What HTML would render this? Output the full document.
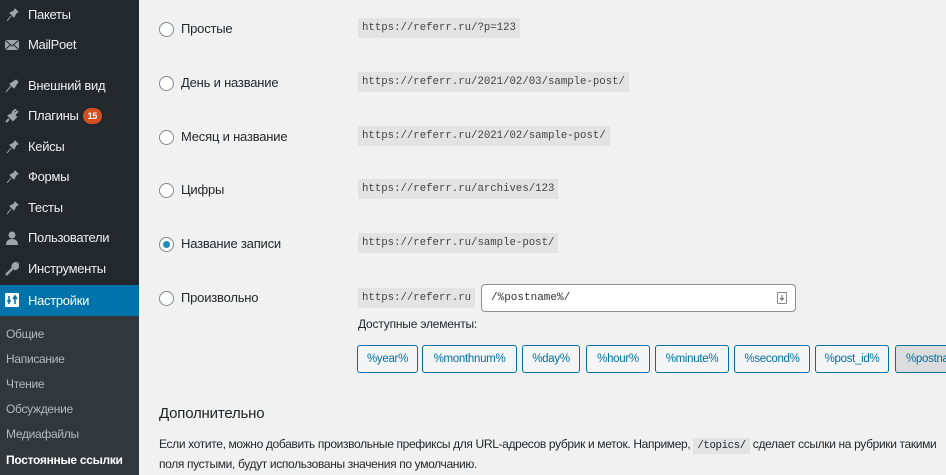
<!DOCTYPE html>
<html><head><meta charset="utf-8"><style>
*{box-sizing:border-box;margin:0;padding:0}
body{width:946px;height:475px;overflow:hidden;background:#f1f1f1;font-family:"Liberation Sans",sans-serif;position:relative;color:#23282d}
#sb{position:absolute;left:0;top:0;width:139px;height:475px;background:#23282d}
.mi{position:absolute;left:0;width:139px;height:30px;color:#eee;font-size:13px;line-height:30px;padding-left:28px;letter-spacing:-0.3px}
.ic{position:absolute;left:5px;top:8px;width:14px;height:14px}
.act{background:#0073aa;color:#fff}
.badge{display:inline-block;background:#d54e21;color:#fff;font-size:9px;font-weight:bold;border-radius:9px;height:16px;line-height:16px;padding:0 5px;margin-left:4px;vertical-align:1px}
#sub{position:absolute;left:0;top:316px;width:139px;height:159px;background:#32373c}
.si{position:absolute;left:6px;font-size:12px;color:#b4b9be;letter-spacing:-0.3px}
.arrow{position:absolute;left:131px;top:292px;width:0;height:0;border:8px solid transparent;border-right-color:#f1f1f1}
.r{position:absolute;left:159px;width:15px;height:15px;border:1px solid #7e8993;border-radius:50%;background:#fff}
.r.on::after{content:"";position:absolute;left:3px;top:3px;width:7px;height:7px;border-radius:50%;background:#1e8cbe}
.lb{position:absolute;left:181px;font-size:13px;color:#23282d;letter-spacing:-0.2px}
code{position:absolute;left:358px;height:20px;line-height:20px;padding:0 4px;background:#e3e3e3;font-family:"Liberation Mono",monospace;font-size:10.7px;color:#444}
.inp{position:absolute;left:481px;top:284px;width:315px;height:28px;border:1px solid #8c8f94;border-radius:4px;background:#fff;font-family:"Liberation Mono",monospace;font-size:11px;line-height:26px;padding-left:9px;color:#333}
.tag{position:absolute;top:345px;height:28px;border:1px solid #0071a1;border-radius:3px;background:#f3f5f6;color:#0071a1;font-size:11.5px;line-height:26px;text-align:center;letter-spacing:-0.3px;overflow:hidden;white-space:nowrap}
</style></head><body>
<div id="sb">
<div class="mi" style="top:0">Пакеты<svg class="ic" viewBox="0 0 14 14"><path d="M2 13L6 8M5 5L9 9L11 5L13 4L10 1L9 3Z" fill="#a0a5aa" stroke="#a0a5aa"/></svg></div>
<div class="mi" style="top:30px">MailPoet<svg class="ic" viewBox="0 0 14 14"><rect x="0" y="2" width="14" height="10" fill="#a0a5aa"/><path d="M0 2L7 8L14 2M0 12L5 7M14 12L9 7" stroke="#23282d" fill="none"/></svg></div>
<div class="mi" style="top:71px">Внешний вид<svg class="ic" viewBox="0 0 14 14"><path d="M1 13L6 7M5 5L9 9L13 3L11 1Z" fill="#a0a5aa" stroke="#a0a5aa"/></svg></div>
<div class="mi" style="top:101px">Плагины<span class="badge">15</span><svg class="ic" viewBox="0 0 14 14"><path d="M1 13L4 10M3 6L8 11L11 8L9 6L13 2M7 4L11 0" fill="#a0a5aa" stroke="#a0a5aa" stroke-width="2"/></svg></div>
<div class="mi" style="top:132px">Кейсы<svg class="ic" viewBox="0 0 14 14"><path d="M2 13L6 8M5 5L9 9L11 5L13 4L10 1L9 3Z" fill="#a0a5aa" stroke="#a0a5aa"/></svg></div>
<div class="mi" style="top:162px">Формы<svg class="ic" viewBox="0 0 14 14"><path d="M2 13L6 8M5 5L9 9L11 5L13 4L10 1L9 3Z" fill="#a0a5aa" stroke="#a0a5aa"/></svg></div>
<div class="mi" style="top:193px">Тесты<svg class="ic" viewBox="0 0 14 14"><path d="M2 13L6 8M5 5L9 9L11 5L13 4L10 1L9 3Z" fill="#a0a5aa" stroke="#a0a5aa"/></svg></div>
<div class="mi" style="top:223px">Пользователи<svg class="ic" viewBox="0 0 14 14"><circle cx="7" cy="4" r="3.5" fill="#a0a5aa"/><path d="M1 14Q1 8 7 8Q13 8 13 14Z" fill="#a0a5aa"/></svg></div>
<div class="mi" style="top:254px">Инструменты<svg class="ic" viewBox="0 0 14 14"><path d="M1 13L8 6M8 6Q7 2 11 1L10 3L12 4L13 3Q13 7 9 7" stroke="#a0a5aa" stroke-width="2.5" fill="#a0a5aa"/></svg></div>
<div class="mi act" style="top:285px;height:31px;line-height:31px">Настройки<svg class="ic" viewBox="0 0 14 14"><rect width="14" height="14" rx="1" fill="#fff"/><path d="M4 3V11M2 8H6M10 11V3M8 6L10 3L12 6" stroke="#0073aa" stroke-width="1.6" fill="none"/></svg></div>
</div>
<div class="arrow"></div>
<div id="sub">
<div class="si" style="top:11px">Общие</div>
<div class="si" style="top:36px">Написание</div>
<div class="si" style="top:61px">Чтение</div>
<div class="si" style="top:86px">Обсуждение</div>
<div class="si" style="top:111px">Медиафайлы</div>
<div class="si" style="top:137px;color:#fff;font-weight:bold">Постоянные ссылки</div>
</div>

<div class="r" style="top:22px"></div><div class="lb" style="top:21px">Простые</div><code style="top:18px">https://referr.ru/?p=123</code>
<div class="r" style="top:76px"></div><div class="lb" style="top:75px">День и название</div><code style="top:72px">https://referr.ru/2021/02/03/sample-post/</code>
<div class="r" style="top:130px"></div><div class="lb" style="top:129px">Месяц и название</div><code style="top:126px">https://referr.ru/2021/02/sample-post/</code>
<div class="r" style="top:183px"></div><div class="lb" style="top:182px">Цифры</div><code style="top:179px">https://referr.ru/archives/123</code>
<div class="r on" style="top:237px"></div><div class="lb" style="top:236px">Название записи</div><code style="top:233px">https://referr.ru/sample-post/</code>
<div class="r" style="top:291px"></div><div class="lb" style="top:290px">Произвольно</div><code style="top:288px">https://referr.ru</code>
<div class="inp">/%postname%/<svg style="position:absolute;right:8px;top:7px" width="10" height="12" viewBox="0 0 10 12"><rect x=".5" y=".5" width="9" height="11" rx="1" fill="#fff" stroke="#888"/><path d="M5 3V8M3 6L5 8L7 6" stroke="#666" fill="none"/></svg></div>
<div class="lb" style="left:358px;top:317px;font-size:12px">Доступные элементы:</div>
<div class="tag" style="left:357px;width:61px">%year%</div>
<div class="tag" style="left:422px;width:95px">%monthnum%</div>
<div class="tag" style="left:522px;width:58px">%day%</div>
<div class="tag" style="left:586px;width:64px">%hour%</div>
<div class="tag" style="left:655px;width:74px">%minute%</div>
<div class="tag" style="left:734px;width:76px">%second%</div>
<div class="tag" style="left:815px;width:74px">%post_id%</div>
<div class="tag" style="left:895px;width:60px;background:#dcdcde;text-align:left;padding-left:10px">%postname%</div>

<div class="lb" style="left:159px;top:405px;font-size:15px;color:#1d2327">Дополнительно</div>
<div class="lb" style="left:159px;top:437px;font-size:12px;white-space:nowrap;letter-spacing:-0.35px">Если хотите, можно добавить произвольные префиксы для URL-адресов рубрик и меток. Например, <span style="background:#e3e3e3;font-family:'Liberation Mono',monospace;font-size:10.7px;padding:2px 4px">/topics/</span> сделает ссылки на рубрики такими</div>
<div class="lb" style="left:159px;top:457px;font-size:12px;letter-spacing:-0.35px">поля пустыми, будут использованы значения по умолчанию.</div>
</body></html>
